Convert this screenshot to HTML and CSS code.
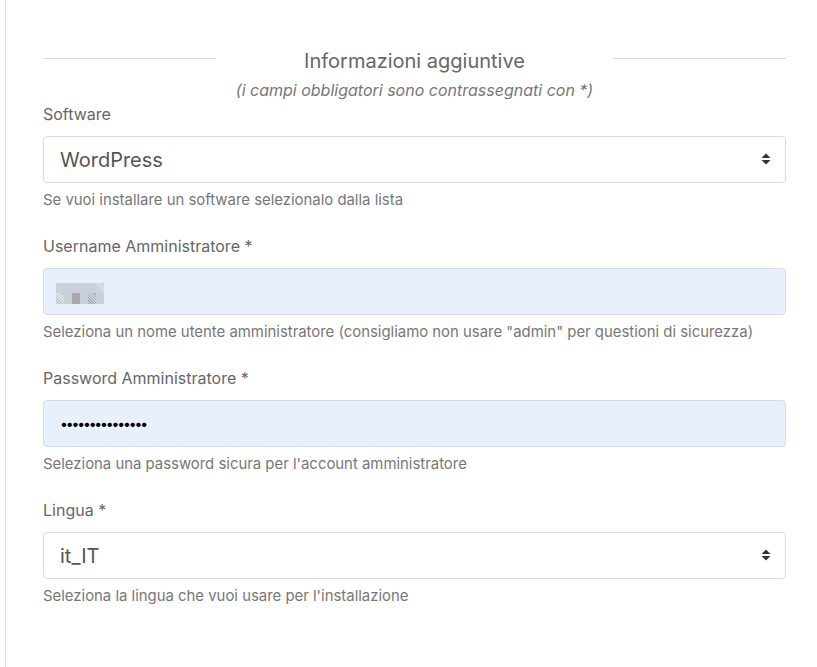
FILE: index.html
```html
<!DOCTYPE html>
<html lang="it">
<head>
<meta charset="utf-8">
<title>Informazioni aggiuntive</title>
<link rel="stylesheet" href="styles.css">
</head>
<body>
<div class="panel">
  <div class="legend">
    <span class="legend-line"></span>
    <h2 class="legend-title">Informazioni aggiuntive</h2>
    <span class="legend-line"></span>
  </div>
  <p class="legend-note">(i campi obbligatori sono contrassegnati con *)</p>

  <div class="group">
    <label class="label" for="software">Software</label>
    <div class="select-wrap">
      <select id="software" class="control select">
        <option>WordPress</option>
      </select>
      <svg class="select-arrow" width="10" height="12" viewBox="0 0 10 12"><path d="M5 0.5 L9.5 5 L0.5 5 Z" fill="#333"/><path d="M0.5 7 L9.5 7 L5 11.5 Z" fill="#333"/></svg>
    </div>
    <p class="help">Se vuoi installare un software selezionalo dalla lista</p>
  </div>

  <div class="group">
    <label class="label" for="user">Username Amministratore *</label>
    <div class="input-wrap">
      <input id="user" class="control autofill" type="text" value="" aria-label="Username">
      <div class="mosaic" aria-hidden="true">
        <span class="m m1"></span><span class="m m1"></span><span class="m m1"></span><span class="m m1"></span><span class="m m1"></span><span class="m m3"></span>
        <span class="m m3"></span><span class="m m1"></span><span class="m m2"></span><span class="m m1"></span><span class="m m4"></span><span class="m m1"></span>
      </div>
    </div>
    <p class="help">Seleziona un nome utente amministratore (consigliamo non usare "admin" per questioni di sicurezza)</p>
  </div>

  <div class="group">
    <label class="label" for="pass">Password Amministratore *</label>
    <input id="pass" class="control autofill pass" type="password" value="abcdefghijklmno">
    <p class="help">Seleziona una password sicura per l'account amministratore</p>
  </div>

  <div class="group">
    <label class="label" for="lang">Lingua *</label>
    <div class="select-wrap">
      <select id="lang" class="control select">
        <option>it_IT</option>
      </select>
      <svg class="select-arrow" width="10" height="12" viewBox="0 0 10 12"><path d="M5 0.5 L9.5 5 L0.5 5 Z" fill="#333"/><path d="M0.5 7 L9.5 7 L5 11.5 Z" fill="#333"/></svg>
    </div>
    <p class="help">Seleziona la lingua che vuoi usare per l'installazione</p>
  </div>
</div>
</body>
</html>
```

FILE: styles.css
```css
html, body {
  margin: 0;
  padding: 0;
  background: #fff;
}

body {
  font-family: Inter, "Noto Sans", "Liberation Sans", sans-serif;
  color: #555;
}

.panel {
  margin-left: 5px;
  border-left: 1px solid #e2e2e2;
  padding: 49px 31px 60px 37px;
  min-height: 558px;
}

.legend {
  display: grid;
  grid-template-columns: 173px 1fr 173px;
  align-items: start;
}

.legend-line {
  display: block;
  border-top: 1px solid #dcdcdc;
  margin-top: 9px;
}

.legend-title {
  margin: 0;
  font-size: 20px;
  line-height: 24px;
  font-weight: 400;
  color: #666;
  text-align: center;
}

.legend-note {
  margin: 7px 0 0;
  font-size: 16px;
  line-height: 20px;
  font-style: italic;
  color: #777;
  text-align: center;
}

.group {
  display: flex;
  flex-direction: column;
  padding-top: 4px;
  padding-bottom: 22px;
}

.label {
  font-size: 16px;
  line-height: 20px;
  color: #666;
  margin-bottom: 12px;
}

.control {
  box-sizing: border-box;
  width: 100%;
  height: 47px;
  margin: 0;
  border: 1px solid #dcdcdc;
  border-radius: 4px;
  padding: 0 16px;
  font-family: inherit;
  font-size: 20px;
  color: #555;
  background: #fff;
  outline: none;
}

.select {
  -webkit-appearance: none;
  appearance: none;
}

.select-wrap,
.input-wrap {
  position: relative;
}

.select-arrow {
  position: absolute;
  right: 15px;
  top: 17px;
  pointer-events: none;
}

.autofill {
  background: #e8f0fe;
  border-color: #d6dce6;
  color: #000;
}

.pass {
  font-size: 14px;
  letter-spacing: -2.15px;
}

.mosaic {
  position: absolute;
  left: 13px;
  top: 15px;
  display: grid;
  grid-template-columns: repeat(6, 8px);
  grid-template-rows: 10px 11px;
}

.m { display: block; }
.m1 { background: #c9cfdb; }
.m2 { background: #a9a9ab; }
.m3 { background: #d4d8e0; background-image: repeating-linear-gradient(45deg, #c5c9d0 0 1px, #e0e4ec 1px 2px); }
.m4 { background: #b8bcc4; background-image: repeating-linear-gradient(45deg, #a8acb4 0 1px, #d0d4dc 1px 2px); }

.help {
  margin: 7px 0 0;
  font-size: 14.9px;
  line-height: 20px;
  color: #777;
}
```
